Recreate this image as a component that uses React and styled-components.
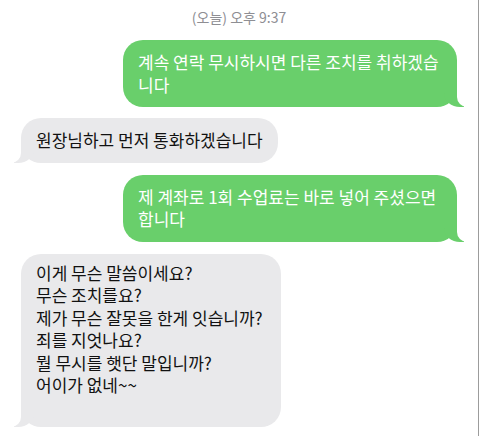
import React from 'react';
import styled, { createGlobalStyle } from 'styled-components';

const GlobalStyle = createGlobalStyle`
  html, body { margin: 0; padding: 0; background: #fff; }
  body {
    font-family: "Noto Sans CJK KR", "Noto Sans", sans-serif;
    -webkit-font-smoothing: antialiased;
  }
`;

const Screen = styled.div`
  width: 479px;
  height: 436px;
  border-right: 1px solid #9c9c9c;
  box-sizing: border-box;
  overflow: hidden;
  display: flex;
  flex-direction: column;
  padding: 7px 21px 0 21px;
`;

const Stamp = styled.div`
  text-align: center;
  font-size: 14px;
  color: #8e8e93;
  line-height: 20px;
  margin-bottom: 13px;
`;

const Row = styled.div`
  display: flex;
  justify-content: ${p => (p.$me ? 'flex-end' : 'flex-start')};
  margin-bottom: ${p => p.$gap || 12}px;
`;

const Bubble = styled.div`
  position: relative;
  max-width: 334px;
  box-sizing: border-box;
  padding: ${p => p.$pad || '11px 15px'};
  border-radius: 20px;
  font-size: 17px;
  line-height: 22.5px;
  white-space: pre-wrap;
  color: ${p => (p.$me ? '#fff' : '#111')};
  background: ${p => (p.$me ? '#69cf6b' : '#e9e9eb')};

  &::before,
  &::after {
    content: '';
    position: absolute;
    bottom: 0;
    height: 22px;
  }

  &::before {
    width: 20px;
    background: ${p => (p.$me ? '#69cf6b' : '#e9e9eb')};
    ${p => (p.$me
      ? 'right: -7px; border-bottom-left-radius: 16px 14px;'
      : 'left: -7px; border-bottom-right-radius: 16px 14px;')}
  }

  &::after {
    width: 26px;
    background: #fff;
    ${p => (p.$me
      ? 'right: -26px; border-bottom-left-radius: 10px;'
      : 'left: -26px; border-bottom-right-radius: 10px;')}
  }
`;

const messages = [
  { me: true, text: '계속 연락 무시하시면 다른 조치를 취하겠습니다', gap: 11 },
  { me: false, text: '원장님하고 먼저 통화하겠습니다', gap: 12 },
  { me: true, text: '제 계좌로 1회 수업료는 바로 넣어 주셨으면 합니다', gap: 12 },
  {
    me: false,
    text: '이게 무슨 말씀이세요?\n무슨 조치를요?\n제가 무슨 잘못을 한게 잇습니까?\n죄를 지엇나요?\n뭘 무시를 햇단 말입니까?\n어이가 없네~~\n ',
    gap: 0,
    pad: '8px 18px 8px 15px',
  },
];

export default function App() {
  return (
    <>
      <GlobalStyle />
      <Screen>
        <Stamp>(오늘) 오후 9:37</Stamp>
        {messages.map((m, i) => (
          <Row key={i} $me={m.me} $gap={m.gap}>
            <Bubble $me={m.me} $pad={m.pad}>{m.text}</Bubble>
          </Row>
        ))}
      </Screen>
    </>
  );
}
